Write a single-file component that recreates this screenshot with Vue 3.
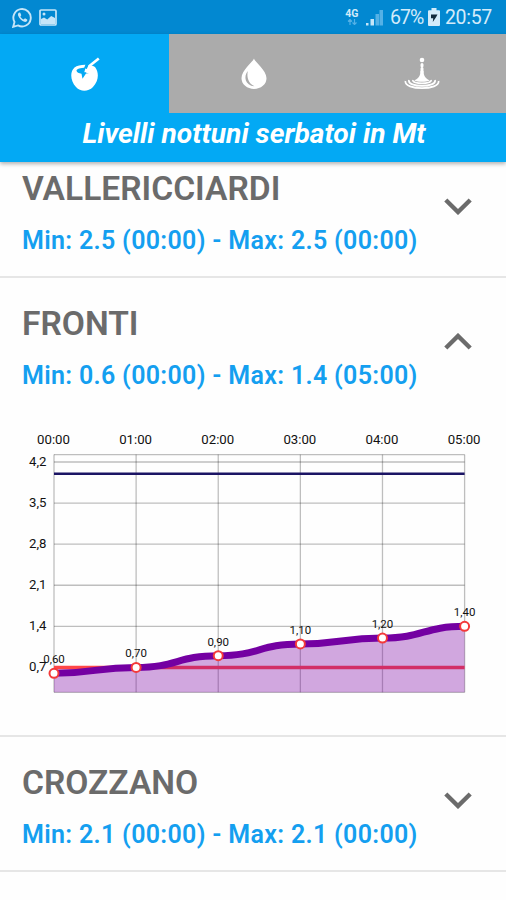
<template>
  <div class="screen">
    <div class="status-bar">
      <div class="status-left">
        <svg class="whatsapp" width="21" height="21" viewBox="0 0 21 21">
          <path d="M1.200 19.800 2.500 15A8.700 8.700 0 1 1 6 18.400Z" fill="none" stroke="#c5e5f8" stroke-width="1.900" />
          <path d="M7.200 5.500c-1 .5-1.600 1.700-1.100 3.100 1 3 3.300 5.200 6.200 6.200 1.500.4 2.700-.3 3-1.500l-.1-.9-2.200-1.100-1.400 1.300c-1.500-.7-2.500-1.700-3.200-3.100L9.300 8.300 8.300 5.700Z" fill="#c5e5f8" />
        </svg>
        <svg width="18" height="17" viewBox="0 0 18 17">
          <rect x="1" y="1" width="16" height="15" rx="1" fill="none" stroke="#c5e5f8" stroke-width="1.700" />
          <circle cx="5" cy="5" r="1.500" fill="#c5e5f8" />
          <path d="M2 10l3-1.500 3.200 2 4-3.500L16 9v6H2z" fill="#c5e5f8" />
        </svg>
      </div>
      <div class="status-right">
        <div class="network">
          <span>4G</span>
          <svg width="10" height="6" viewBox="0 0 10 6">
            <path d="M3 6V1M1 2.500 3 .500l2 2M7.500 0v5M5.500 3.500l2 2 2-2" fill="none" stroke="#55b1e6" stroke-width="1.200" />
          </svg>
        </div>
        <svg class="signal" width="18" height="18" viewBox="0 0 18 18">
          <rect x="0" y="15" width="2.500" height="2.500" fill="#c5e5f8" />
          <rect x="4.500" y="11" width="3.500" height="6.500" fill="#c5e5f8" />
          <rect x="9.500" y="6" width="3.500" height="11.500" fill="#55b1e6" />
          <rect x="13.500" y="2" width="3.500" height="15.500" fill="#55b1e6" />
        </svg>
        <span class="percent">67%</span>
        <svg class="battery" width="12" height="18" viewBox="0 0 12 18">
          <path d="M3.500 0h5v2.200H11q1 0 1 1V17q0 1-1 1H1q-1 0-1-1V3.200q0-1 1-1h2.500z" fill="#d3ebfa" />
          <path d="M3 6.500h6.500L8 9.200 4.800 14l.4-3.700H3z" fill="#10293c" />
        </svg>
        <span class="clock">20:57</span>
      </div>
    </div>

    <header class="app-bar">
      <nav class="tabs">
        <button v-for="tab in tabs" :key="tab" class="tab" :class="{ active: tab === tabActiva }" @click="tabActiva = tab">
          <svg v-if="tab === 'serbatoi'" width="30" height="36" viewBox="0 0 30 36">
            <path d="M4.500 11.500C-.500 16 .500 25 6 31c4.500 5 12 5 17 0 5.500-6 6.500-14 2-20C21 8 9 7.500 4.500 11.500Z" fill="#fff" />
            <path d="M6.500 14.500c0-1.500 4-2.600 9-2.700l-1.200 4.500h3.500l.7 1-2.500.2-3.500 5.200-1-5C9 17.500 6.500 16.200 6.500 14.500Z" fill="#03a9f4" />
            <path d="M15.500 12.500 17.500 7.500 24.500 2" fill="none" stroke="#03a9f4" stroke-width="3" />
            <path d="M17.200 17 20 9.500 28.800 2.500" fill="none" stroke="#fff" stroke-width="2.700" />
          </svg>
          <svg v-else-if="tab === 'acqua'" width="28" height="32" viewBox="0 0 28 32">
            <path d="M14 .500C15 4.500 26.500 12 26.500 20.200a12.500 10.800 0 0 1-25 0C1.500 12 12.500 4.500 14 .500Z" fill="#fff" />
            <path d="M7.800 13c-4.500 5.500-2.800 14.500 6.700 15.300C8.500 25.500 6.500 19.500 7.800 13Z" fill="#ababab" />
          </svg>
          <svg v-else width="36" height="33" viewBox="0 0 36 33">
            <circle cx="18" cy="3" r="2.300" fill="#fff" />
            <path d="M18 7.500v1.500M18 11.500v4" stroke="#fff" stroke-width="3" stroke-linecap="round" />
            <path d="M16.500 14h3c0 5 2.300 7.500 6.300 9.500-4 1.800-11.600 1.800-15.600 0 4-2 6.300-4.500 6.300-9.500Z" fill="#fff" />
            <path d="M9 23c-1.500 4.500 19.500 4.500 18 0M5 23c-2.200 7.800 28.200 7.800 26 0M1.500 24c-2 9.500 35 9.500 33 0" fill="none" stroke="#fff" stroke-width="1.700" />
          </svg>
        </button>
      </nav>
      <h1>Livelli nottuni serbatoi in Mt</h1>
    </header>

    <main class="lista">
      <section v-for="s in serbatoi" :key="s.nome" class="serbatoio">
        <div class="testata" @click="s.aperto = !s.aperto">
          <div>
            <h2>{{ s.nome }}</h2>
            <p>Min: {{ s.min }} - Max: {{ s.max }}</p>
          </div>
          <svg class="freccia" :class="{ su: s.aperto }" width="28" height="17" viewBox="0 0 28 17">
            <path d="M1.800 2 14 14 26.200 2" fill="none" stroke="#6b6b6b" stroke-width="4.400" />
          </svg>
        </div>

        <svg v-if="s.aperto && s.livelli" class="grafico" width="506" height="324" viewBox="0 411 506 324">
          <!-- griglia -->
          <g stroke="#000" stroke-opacity=".25" stroke-width="1.300">
            <path :d="`M${x0} ${top}H${x1}M${x0} ${bottom}H${x1}`" />
            <line v-for="v in scala.slice(0, 5)" :key="v" :x1="x0" :x2="x1" :y1="y(v)" :y2="y(v)" />
            <line v-for="(l, i) in s.livelli" :key="i" :x1="x(i)" :x2="x(i)" :y1="top" :y2="bottom" />
          </g>
          <line :x1="x0" :x2="x1" :y1="y(4)" :y2="y(4)" stroke="#1b1464" stroke-width="2.400" />
          <line :x1="x0" :x2="x1" :y1="y(0.7)" :y2="y(0.7)" stroke="#ff4747" stroke-width="3.600" />
          <!-- area e curva -->
          <path :d="`${curva(s.livelli)}V${bottom}H${x0}Z`" fill="#7b00a5" fill-opacity=".34" />
          <path :d="curva(s.livelli)" fill="none" stroke="#7400a2" stroke-width="7" />
          <g fill="#111">
            <text v-for="(l, i) in s.livelli" :key="i" class="asse" :x="x(i) - 0.5" y="444.200" text-anchor="middle">0{{ i }}:00</text>
            <text v-for="v in scala" :key="v" class="asse" x="46.500" :y="y(v) + 4" text-anchor="end">{{ numero(v, 1) }}</text>
            <text v-for="(l, i) in s.livelli" :key="i" class="valore" :x="x(i)" :y="y(l) - 10" text-anchor="middle">{{ numero(l, 2) }}</text>
          </g>
          <circle v-for="(l, i) in s.livelli" :key="i" :cx="x(i)" :cy="y(l)" r="4.500" fill="#fff" stroke="#f43a3a" stroke-width="2" />
        </svg>
      </section>
    </main>
  </div>
</template>

<script setup>
import { ref } from 'vue';

const tabs = ['serbatoi', 'acqua', 'falda'];
const tabActiva = ref('serbatoi');

const serbatoi = ref([
  { nome: 'VALLERICCIARDI', min: '2.5 (00:00)', max: '2.5 (00:00)', aperto: false },
  { nome: 'FRONTI', min: '0.6 (00:00)', max: '1.4 (05:00)', aperto: true, livelli: [0.6, 0.7, 0.9, 1.1, 1.2, 1.4] },
  { nome: 'CROZZANO', min: '2.1 (00:00)', max: '2.1 (00:00)', aperto: false },
]);

// Area del grafico
const x0 = 54;
const x1 = 464.6;
const top = 454.6;
const bottom = 692.3;
const scala = [4.2, 3.5, 2.8, 2.1, 1.4, 0.7];

const x = (i) => x0 + (i * (x1 - x0)) / 5;
const y = (v) => 462 + (4.2 - v) * 58.7;
const numero = (v, decimali) => v.toFixed(decimali).replace('.', ',');

// Curva con tangenti orizzontali nei punti
const curva = (livelli) => {
  let d = `M${x(0)} ${y(livelli[0])}`;
  for (let i = 1; i < livelli.length; i++) {
    const medio = (x(i - 1) + x(i)) / 2;
    d += `C${medio} ${y(livelli[i - 1])} ${medio} ${y(livelli[i])} ${x(i)} ${y(livelli[i])}`;
  }
  return d;
};
</script>

<style>
body {
  margin: 0;
  background: #fefefe;
}
</style>

<style scoped>
.screen {
  width: 506px;
  height: 900px;
  overflow: hidden;
  display: flex;
  flex-direction: column;
  background: #fefefe;
  font-family: Roboto, sans-serif;
}

.status-bar {
  flex: none;
  height: 34px;
  box-sizing: border-box;
  padding: 0 14px 0 12px;
  display: flex;
  justify-content: space-between;
  align-items: center;
  background: #0288d1;
  color: #d3ebfa;
}

.status-left,
.status-right {
  display: flex;
  align-items: center;
}

.status-left {
  gap: 6px;
}

.network {
  display: flex;
  flex-direction: column;
  align-items: center;
  width: 14px;
  margin-right: 7px;
  font-size: 10.5px;
  font-weight: 700;
  line-height: 10px;
}

.percent,
.clock {
  font-size: 19.5px;
  line-height: 34px;
  padding-top: 2px;
}

.percent {
  width: 33px;
  margin-left: 6px;
  letter-spacing: -0.9px;
}

.battery {
  margin: 0 5px;
}

.clock {
  letter-spacing: -0.3px;
}

.app-bar {
  flex: none;
  height: 128px;
  position: relative;
  z-index: 1;
  background: #03a9f4;
  box-shadow: 0 2px 4px rgba(0, 0, 0, 0.3);
}

.tabs {
  display: grid;
  grid-template-columns: 169px 169px 168px;
  height: 79px;
}

.tab {
  display: flex;
  justify-content: center;
  align-items: center;
  border: none;
  padding: 0;
  background: #ababab;
}

.tab.active {
  background: #03a9f4;
}

h1 {
  margin: 0;
  padding-left: 2px;
  text-align: center;
  color: #fff;
  font-size: 28.2px;
  line-height: 42px;
  font-weight: 700;
  font-style: italic;
  white-space: nowrap;
}

.lista {
  flex: 1;
  margin-top: -19px;
}

.serbatoio {
  border-bottom: 2px solid #e6e6e6;
}

.testata {
  height: 133px;
  box-sizing: border-box;
  padding: 24px 34px 0 22px;
  display: flex;
  justify-content: space-between;
  cursor: pointer;
}

h2 {
  margin: 0;
  color: #6b6b6b;
  font-size: 33.6px;
  line-height: 44px;
  font-weight: 600;
}

p {
  margin: 10px 0 0;
  color: #149ff0;
  font-size: 25px;
  line-height: 40px;
  font-weight: 600;
  letter-spacing: 0.32px;
}

.freccia {
  margin-top: 31px;
}

.freccia.su {
  transform: rotate(180deg);
}

.grafico {
  display: block;
}

.asse {
  font-size: 13.2px;
}

.valore {
  font-size: 11.5px;
}
</style>
